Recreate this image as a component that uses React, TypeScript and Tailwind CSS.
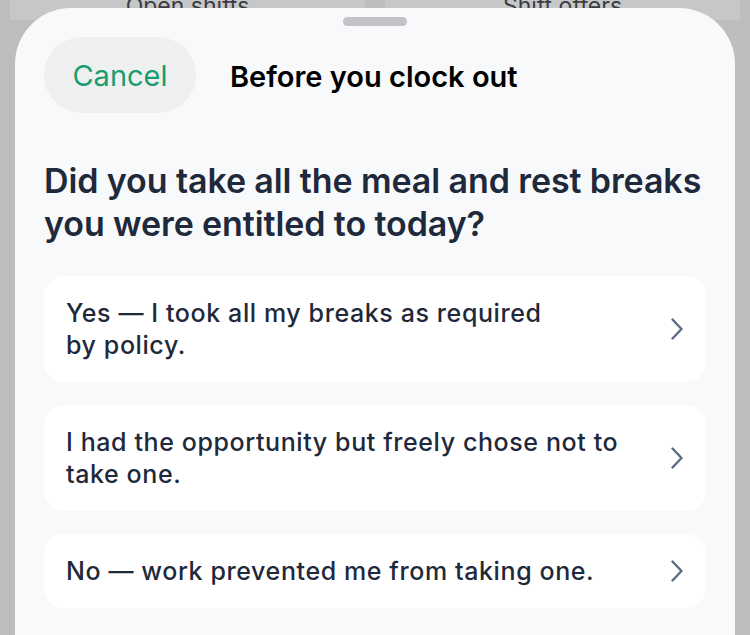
const options = [
  { id: "yes", lines: ["Yes — I took all my breaks as required", "by policy."] },
  { id: "chose", lines: ["I had the opportunity but freely chose not to", "take one."] },
  { id: "no", lines: ["No — work prevented me from taking one."] },
];

const Chevron = () => (
  <svg width="12" height="22" viewBox="0 0 12 22" fill="none" className="shrink-0">
    <path d="M1.5 1.5 L10.5 11 L1.5 20.5" stroke="#5b6b84" strokeWidth="2.4" strokeLinecap="round" strokeLinejoin="round" />
  </svg>
);

export default function App() {
  return (
    <div className="relative h-[635px] w-[750px] overflow-hidden bg-[#bcbdbf] font-['Inter',sans-serif]">
      {/* dimmed screen behind the sheet */}
      <div className="-mt-[20px] grid grid-cols-2 gap-[20px] px-[10px]">
        <div className="flex h-[40px] items-end justify-center bg-[#c6c7c9] pb-[2px] text-[23px] leading-none text-[#3a3c41]">
          Open shifts
        </div>
        <div className="flex h-[40px] items-end justify-center bg-[#c6c7c9] pb-[2px] text-[23px] leading-none text-[#3a3c41]">
          Shift offers
        </div>
      </div>

      <div className="absolute bottom-0 left-[15px] right-[15px] top-[8px] flex flex-col rounded-t-[56px] bg-[#f8f9fb] px-[29px]">
        <div className="mx-auto mt-[9px] h-[9px] w-[64px] rounded-full bg-[#c2c3c7]" />

        <div className="mt-[11px] flex items-center">
          <button className="flex h-[76px] w-[152px] items-center justify-center rounded-full bg-[#eeeff1] pt-[2px] text-[29px] text-[#1a9c6c]">
            Cancel
          </button>
          <h1 className="ml-[34px] pt-[3px] text-[29px] font-semibold text-black">Before you clock out</h1>
        </div>

        <h2 className="mt-[46px] text-[34px] leading-[43px] font-semibold tracking-[-0.1px] text-[#1e293b]">
          Did you take all the meal and rest breaks
          <br />
          you were entitled to today?
        </h2>

        <div className="mt-[31px] flex flex-col gap-[23px]">
          {options.map((o) => (
            <button
              key={o.id}
              className="flex items-center justify-between rounded-[20px] bg-white py-[21px] pl-[22px] pr-[23px] text-left"
            >
              <span className="text-[25px] leading-[32px] font-medium tracking-[0.6px] text-[#1e293b]">
                {o.lines.map((l, i) => (
                  <span key={i} className="block">
                    {l}
                  </span>
                ))}
              </span>
              <Chevron />
            </button>
          ))}
        </div>
      </div>
    </div>
  );
}
